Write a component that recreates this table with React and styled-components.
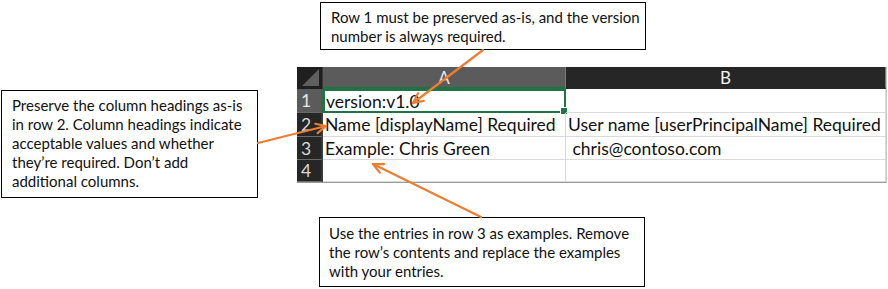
import React from 'react'
import styled, { createGlobalStyle } from 'styled-components'

const ORANGE = '#ed7d31'
const GREEN = '#217346'

const GlobalStyle = createGlobalStyle`
  html, body {
    margin: 0;
    padding: 0;
    background: #fff;
  }
  body {
    font-family: Lato, "Liberation Sans", sans-serif;
    color: #000;
  }
`

const Canvas = styled.div`
  position: relative;
  width: 888px;
  height: 289px;
  overflow: hidden;
  background: #fff;
`

const Sheet = styled.div`
  display: grid;
  grid-template-columns: 26px 243px 320px;
  grid-template-rows: 22px 24px 24px 23px 22px;
  width: 589px;
  margin: 67px 0 0 297px;
  border-bottom: 1px solid #9b9b9b;
  border-right: 1px solid #c8c8c8;
  font-family: Lato, "Liberation Sans", sans-serif;
  font-size: 17.5px;
`

const Corner = styled.div`
  position: relative;
  background: #1f1f1f;
  border-right: 1px solid #3a3a3a;
  &::after {
    content: '';
    position: absolute;
    right: 3px;
    bottom: 3px;
    border-left: 17px solid transparent;
    border-bottom: 17px solid #5f5f5f;
  }
`

const ColHead = styled.div`
  display: flex;
  align-items: center;
  justify-content: center;
  background: ${p => (p.$active ? '#5b5b5b' : '#262626')};
  color: ${p => (p.$active ? '#e6e6e6' : '#f2f2f2')};
  border-right: 1px solid #7a7a7a;
  border-bottom: 2px solid ${p => (p.$active ? GREEN : '#262626')};
  box-sizing: border-box;
  font-size: 17px;
`

const RowHead = styled.div`
  display: flex;
  align-items: center;
  padding-left: 4px;
  background: ${p => (p.$active ? '#5b5b5b' : '#262626')};
  color: ${p => (p.$active ? '#e6e6e6' : '#d9d9d9')};
  border-bottom: 1px solid #6a6a6a;
  border-right: 2px solid ${p => (p.$active ? GREEN : '#3a3a3a')};
  box-sizing: border-box;
  font-size: 17.5px;
`

const Cell = styled.div`
  position: relative;
  display: flex;
  align-items: center;
  padding-left: 2px;
  white-space: pre;
  overflow: visible;
  border-right: 1px solid #dadada;
  border-bottom: 1px solid #dadada;
  box-sizing: border-box;
  color: #111;
  ${p =>
    p.$selected &&
    `
    border: 2px solid ${GREEN};
    padding-left: 1px;
    &::after {
      content: '';
      position: absolute;
      right: -4px;
      bottom: -4px;
      width: 6px;
      height: 6px;
      background: ${GREEN};
      border: 1px solid #fff;
    }
  `}
`

const Callout = styled.div`
  position: absolute;
  left: ${p => p.$x}px;
  top: ${p => p.$y}px;
  width: ${p => p.$w}px;
  height: ${p => p.$h}px;
  box-sizing: border-box;
  padding: ${p => p.$pad || '6px 10px'};
  background: #fff;
  border: 1px solid #000;
  font-family: Lato, "Liberation Sans", sans-serif;
  font-size: 15px;
  line-height: 19px;
  color: #111;
  white-space: nowrap;
`

const Line = styled.div``

const Arrows = styled.svg`
  position: absolute;
  left: 0;
  top: 0;
  pointer-events: none;
`

const Arrow = ({ x1, y1, x2, y2 }) => {
  const a = Math.atan2(y2 - y1, x2 - x1)
  const len = 11
  const spread = 0.45
  const p1 = [x2 - len * Math.cos(a - spread), y2 - len * Math.sin(a - spread)]
  const p2 = [x2 - len * Math.cos(a + spread), y2 - len * Math.sin(a + spread)]
  return (
    <g stroke={ORANGE} strokeWidth="2.2" fill="none" strokeLinecap="round" strokeLinejoin="round">
      <line x1={x1} y1={y1} x2={x2} y2={y2} />
      <polyline points={`${p1.join(',')} ${x2},${y2} ${p2.join(',')}`} />
    </g>
  )
}

const rows = [
  { n: 1, a: 'version:v1.0', b: '' },
  { n: 2, a: 'Name [displayName] Required', b: 'User name [userPrincipalName] Required' },
  { n: 3, a: 'Example: Chris Green', b: ' chris@contoso.com' },
  { n: 4, a: '', b: '' }
]

export default function App() {
  return (
    <Canvas>
      <GlobalStyle />
      <Sheet>
        <Corner />
        <ColHead $active>A</ColHead>
        <ColHead>B</ColHead>
        {rows.map(r => (
          <React.Fragment key={r.n}>
            <RowHead $active={r.n === 1}>{r.n}</RowHead>
            <Cell $selected={r.n === 1}>{r.a}</Cell>
            <Cell>{r.b}</Cell>
          </React.Fragment>
        ))}
      </Sheet>

      <Callout $x={320} $y={2} $w={326} $h={48} $pad="5px 10px">
        <Line>Row 1 must be preserved as-is, and the version</Line>
        <Line>number is always required.</Line>
      </Callout>
      <Callout $x={1} $y={90} $w={257} $h={108} $pad="5px 10px">
        <Line>Preserve the column headings as-is</Line>
        <Line>in row 2. Column headings indicate</Line>
        <Line>acceptable values and whether</Line>
        <Line>they’re required. Don’t add</Line>
        <Line>additional columns.</Line>
      </Callout>
      <Callout $x={319} $y={217} $w={326} $h={70} $pad="6px 9px">
        <Line>Use the entries in row 3 as examples. Remove</Line>
        <Line>the row’s contents and replace the examples</Line>
        <Line>with your entries.</Line>
      </Callout>

      <Arrows width="888" height="289">
        <Arrow x1={483} y1={50} x2={413} y2={103} />
        <Arrow x1={258} y1={143} x2={326} y2={126} />
        <Arrow x1={481} y1={217} x2={373} y2={164} />
      </Arrows>
    </Canvas>
  )
}
